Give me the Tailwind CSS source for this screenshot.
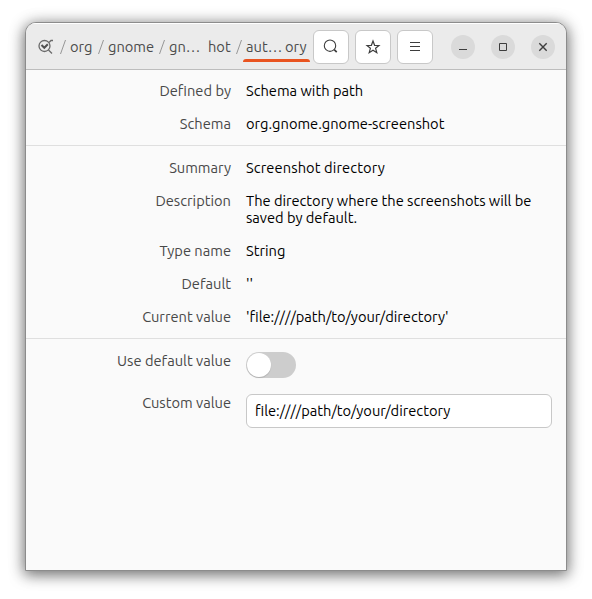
<!DOCTYPE html>
<html lang="en">
<head>
<meta charset="utf-8">
<title>dconf Editor</title>
<script src="https://cdn.jsdelivr.net/npm/@tailwindcss/browser@4"></script>
</head>
<body class="w-[592px] h-[599px] overflow-hidden bg-white pt-[22px] pl-[25px] font-[Ubuntu,'Noto_Sans',sans-serif] text-[14.667px] leading-[17px] text-black">
<main class="w-[542px] h-[549px] flex flex-col overflow-hidden rounded-t-[11px] border border-[#8c8c8c] bg-[#fafafa] shadow-[0_3px_14px_1px_rgba(0,0,0,0.5),0_2px_20px_rgba(0,0,0,0.12)]">
  <header class="h-[47px] shrink-0 flex items-center border-t border-b border-t-white border-b-[#bdbdbd] bg-[#ebebeb] text-[#4b4b4b]">
    <nav class="flex h-full items-center w-[287px] pb-px whitespace-nowrap">
      <svg class="ml-[12px] mr-[5px] mt-px w-4 h-4 shrink-0" viewBox="0 0 16 16" fill="none" stroke="#6a6a6a"><circle cx="6.500" cy="7" r="5.500" stroke-width="1.300"/><path d="M3.500 6 6.300 8.800 9.800 5.300" stroke="#505050" stroke-width="2"/><path d="m10.500 11 3.500 3.500" stroke-width="1.300"/><path d="m11 3.500 2-2h2" stroke-width="1.300"/></svg>
      <svg class="mt-px w-2 h-4 shrink-0" viewBox="0 0 8 16" stroke="#969696"><path d="M1.500 15 6.500 1"/></svg>
      <span class="ml-[3px] w-[24px]">org</span>
      <svg class="ml-[3px] mt-px w-2 h-4 shrink-0" viewBox="0 0 8 16" stroke="#969696"><path d="M1.500 15 6.500 1"/></svg>
      <span class="ml-[3px] w-[47px]">gnome</span>
      <svg class="ml-[3px] mt-px w-2 h-4 shrink-0" viewBox="0 0 8 16" stroke="#969696"><path d="M1.500 15 6.500 1"/></svg>
      <span class="ml-[3px] w-[39px]">gn…</span>
      <span class="w-[23px]">hot</span>
      <svg class="ml-[4px] mt-px w-2 h-4 shrink-0" viewBox="0 0 8 16" stroke="#969696"><path d="M1.500 15 6.500 1"/></svg>
      <span class="relative ml-[3px] w-[39px] h-full flex items-center">aut…<i class="absolute left-[-3px] top-[35px] w-[67px] h-[3px] bg-[#e95420] rounded-t-[3px]"></i></span>
      <span>ory</span>
    </nav>
    <div class="flex gap-[6px]">
      <button class="w-9 h-[34px] flex items-center justify-center rounded-[6px] border border-[#c8c8c8] bg-white"><svg class="w-4 h-4" viewBox="0 0 16 16" fill="none" stroke="#3d3d3d" stroke-width="1.100"><circle cx="7" cy="6.700" r="5.700"/><path d="m11.200 10.700 2.500 2.500" stroke-width="1.700"/></svg></button>
      <button class="w-9 h-[34px] flex items-center justify-center rounded-[6px] border border-[#c8c8c8] bg-white"><svg class="w-4 h-4" viewBox="0 0 16 16" fill="none" stroke="#3d3d3d" stroke-width="1.200"><path d="M8 2 9.600 6.300 14 6.500 10.600 9.300 11.800 13.700 8 11.200 4.200 13.700 5.400 9.300 2 6.500 6.400 6.300Z"/></svg></button>
      <button class="w-9 h-[34px] flex items-center justify-center rounded-[6px] border border-[#c8c8c8] bg-white"><svg class="w-4 h-4" viewBox="0 0 16 16" stroke="#3d3d3d"><path d="M3 3.500h10M3 7.500h10M3 11.500h10"/></svg></button>
    </div>
    <div class="flex gap-4 ml-[18px]">
      <button class="w-6 h-6 rounded-full bg-[#dadada] flex items-center justify-center"><svg class="w-4 h-4" viewBox="0 0 16 16" stroke="#3d3d3d"><path d="M4 10.500h8"/></svg></button>
      <button class="w-6 h-6 rounded-full bg-[#dadada] flex items-center justify-center"><svg class="w-4 h-4" viewBox="0 0 16 16" fill="none" stroke="#3d3d3d"><path d="M4.500 4.500h7v7h-7z"/></svg></button>
      <button class="w-6 h-6 rounded-full bg-[#dadada] flex items-center justify-center"><svg class="w-4 h-4" viewBox="0 0 16 16" stroke="#3d3d3d" stroke-width="1.400"><path d="m4.300 4.300 7.400 7.400M11.700 4.300l-7.400 7.400"/></svg></button>
    </div>
  </header>
  <section class="pt-1 pb-[5px] border-b border-[#dfdfdf]">
    <div class="flex gap-[15px] py-2"><div class="w-[205px] text-right text-[#484848]">Defined by</div><div>Schema with path</div></div>
    <div class="flex gap-[15px] py-2"><div class="w-[205px] text-right text-[#484848]">Schema</div><div>org.gnome.gnome-screenshot</div></div>
  </section>
  <section class="py-[5px] border-b border-[#dfdfdf]">
    <div class="flex gap-[15px] py-2"><div class="w-[205px] text-right text-[#484848]">Summary</div><div class="tracking-[0.1px]">Screenshot directory</div></div>
    <div class="flex gap-[15px] py-2"><div class="w-[205px] text-right text-[#484848]">Description</div><div class="whitespace-nowrap tracking-[-0.02px]">The directory where the screenshots will be<br>saved by default.</div></div>
    <div class="flex gap-[15px] py-2"><div class="w-[205px] text-right text-[#484848]">Type name</div><div>String</div></div>
    <div class="flex gap-[15px] py-2"><div class="w-[205px] text-right text-[#484848]">Default</div><div>''</div></div>
    <div class="flex gap-[15px] py-2"><div class="w-[205px] text-right text-[#484848]">Current value</div><div>'file:////path/to/your/directory'</div></div>
  </section>
  <section class="pt-[5px]">
    <div class="flex gap-[15px] py-2"><div class="w-[205px] text-right text-[#484848]">Use default value</div><div class="w-[50px] h-[26px] rounded-full bg-[#cdcdcd] p-px"><div class="w-6 h-6 rounded-full bg-white shadow-[0_1px_1px_rgba(0,0,0,0.15)]"></div></div></div>
    <div class="flex gap-[15px] py-2"><div class="w-[205px] text-right text-[#484848]">Custom value</div><div class="w-[306px] h-[34px] flex items-center pb-px px-2 rounded-[6px] border border-[#c8c8c8] bg-white">file:////path/to/your/directory</div></div>
  </section>
</main>
</body>
</html>
